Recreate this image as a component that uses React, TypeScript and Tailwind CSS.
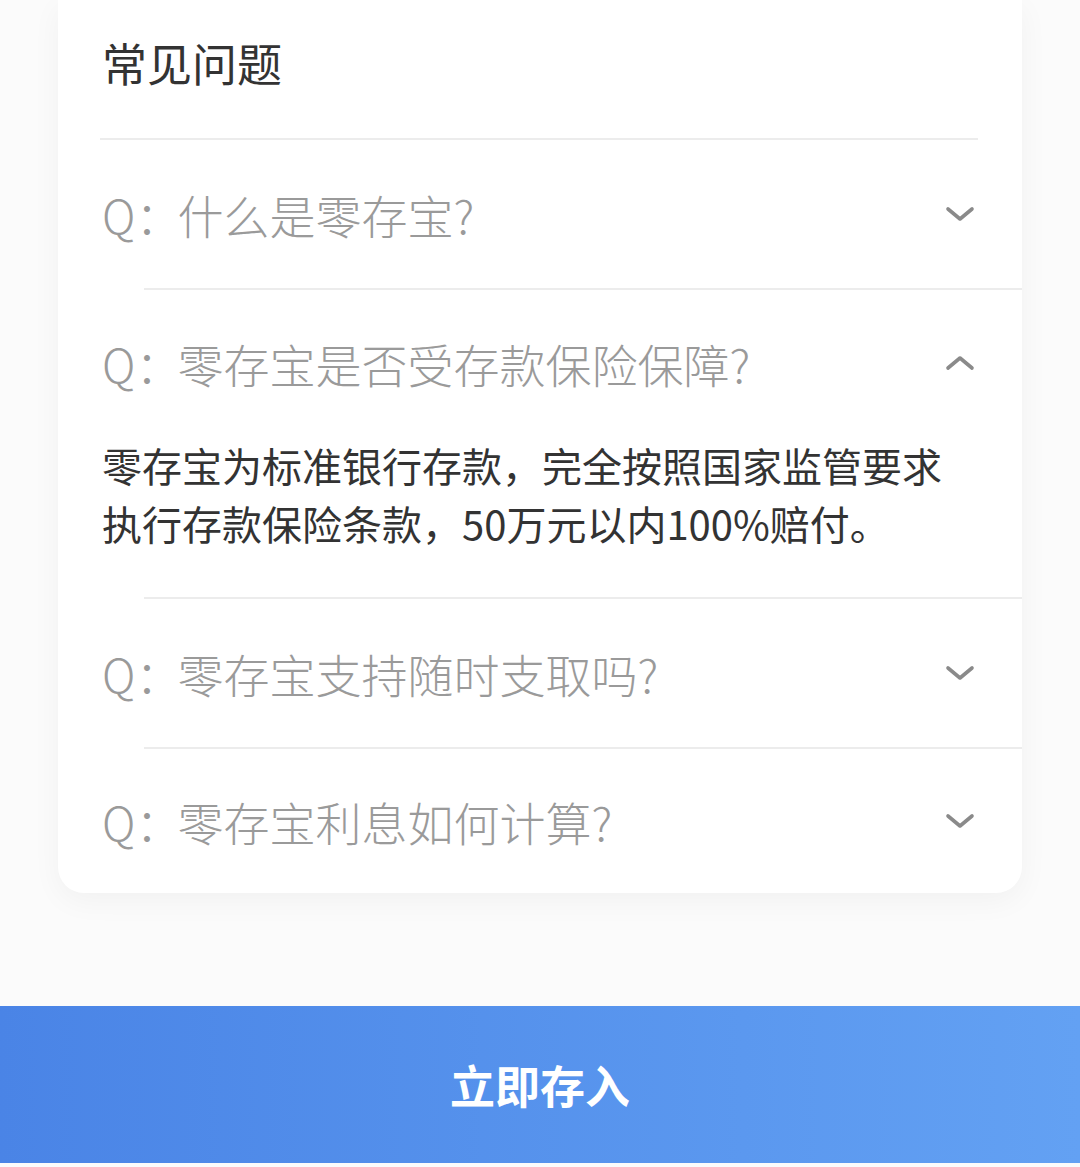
import React from "react";

const font = { fontFamily: '"Noto Sans CJK SC", "Noto Sans", sans-serif' };

function Chevron({ up }: { up?: boolean }) {
  return (
    <svg width="30" height="16" viewBox="0 0 30 16" className="shrink-0">
      <path
        d={up ? "M3 13 L15 3 L27 13" : "M3 3 L15 13 L27 3"}
        fill="none"
        stroke="#8a8a8a"
        strokeWidth="3.6"
        strokeLinecap="round"
        strokeLinejoin="round"
      />
    </svg>
  );
}

function QRow({ q, up, h }: { q: string; up?: boolean; h: string }) {
  return (
    <div className={`flex items-center justify-between pl-[44px] pr-[47px] ${h}`}>
      <div className="flex items-center text-[46px] leading-none text-[#9a9a9a] font-light">
        <span>Q</span>
        <span className="-mr-[4px]">：</span>
        <span>{q}</span>
      </div>
      <Chevron up={up} />
    </div>
  );
}

function Divider() {
  return <div className="ml-[86px] h-[2px] bg-[#ececec]" />;
}

export default function App() {
  return (
    <div className="w-[1080px] h-[1167px] bg-[#fbfbfb] flex flex-col overflow-hidden" style={font}>
      <div className="ml-[58px] w-[964px] bg-white rounded-b-[26px] shadow-[0_8px_30px_rgba(0,0,0,0.045)]">
        <div className="h-[138px] flex items-center pl-[44px] pb-[13px]">
          <span className="text-[45px] leading-none text-[#333333]">常见问题</span>
        </div>
        <div className="ml-[42px] mr-[44px] h-[2px] bg-[#ececec]" />
        <QRow q="什么是零存宝?" h="h-[148px]" />
        <Divider />
        <QRow q="零存宝是否受存款保险保障?" up h="h-[146px]" />
        <div className="pl-[44px] pr-[40px] pb-[45px] text-[40px] leading-[58px] text-[#333333]">
          <div>零存宝为标准银行存款，完全按照国家监管要求</div>
          <div>执行存款保险条款，50万元以内100%赔付。</div>
        </div>
        <Divider />
        <QRow q="零存宝支持随时支取吗?" h="h-[148px]" />
        <Divider />
        <QRow q="零存宝利息如何计算?" h="h-[144px]" />
      </div>
      <div className="mt-[113px] h-[157px] bg-gradient-to-r from-[#4a84e6] to-[#63a1f3] flex items-center justify-center">
        <span className="text-[45px] leading-none text-white font-bold">立即存入</span>
      </div>
    </div>
  );
}
